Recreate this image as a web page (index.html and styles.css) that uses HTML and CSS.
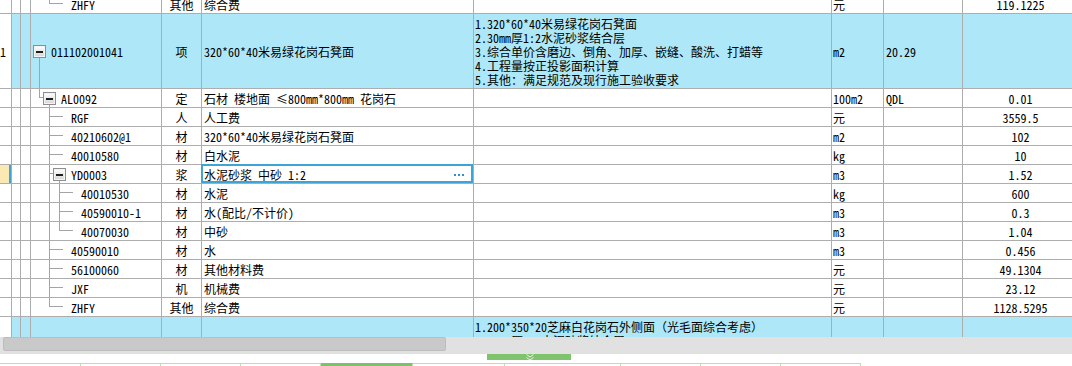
FILE: index.html
```html
<!DOCTYPE html>
<html lang="zh-CN">
<head>
<meta charset="utf-8">
<title>清单</title>
<link rel="stylesheet" href="styles.css">
</head>
<body>
<div class="app">
  <div class="grid">
    <div class="rows">
      <div class="row">
        <div class="c c0"></div><div class="c c1"></div><div class="c c2"></div>
        <div class="c c3 lv3 t-leaf3-last">ZHFY</div>
        <div class="c c4">其他</div><div class="c c5">综合费</div><div class="c c6"></div>
        <div class="c c7">元</div><div class="c c8"></div><div class="c c9">119.1225</div>
      </div>
      <div class="row tall hl">
        <div class="c c0">1</div><div class="c c1"></div><div class="c c2"></div>
        <div class="c c3 lv1 t-l1"><span class="box"></span>011102001041</div>
        <div class="c c4">项</div><div class="c c5">320*60*40米易绿花岗石凳面</div>
        <div class="c c6 desc">
          <span>1.320*60*40米易绿花岗石凳面</span>
          <span>2.30mm厚1:2水泥砂浆结合层</span>
          <span>3.综合单价含磨边、倒角、加厚、嵌缝、酸洗、打蜡等</span>
          <span>4.工程量按正投影面积计算</span>
          <span>5.其他：满足规范及现行施工验收要求</span>
        </div>
        <div class="c c7">m2</div><div class="c c8">20.29</div><div class="c c9"></div>
      </div>
      <div class="row">
        <div class="c c0"></div><div class="c c1"></div><div class="c c2"></div>
        <div class="c c3 lv2 t-l2"><span class="box"></span>AL0092</div>
        <div class="c c4">定</div><div class="c c5">石材 楼地面 ≤800mm*800mm 花岗石</div><div class="c c6"></div>
        <div class="c c7">100m2</div><div class="c c8">QDL</div><div class="c c9">0.01</div>
      </div>
      <div class="row">
        <div class="c c0"></div><div class="c c1"></div><div class="c c2"></div>
        <div class="c c3 lv3 t-leaf3">RGF</div>
        <div class="c c4">人</div><div class="c c5">人工费</div><div class="c c6"></div>
        <div class="c c7">元</div><div class="c c8"></div><div class="c c9">3559.5</div>
      </div>
      <div class="row">
        <div class="c c0"></div><div class="c c1"></div><div class="c c2"></div>
        <div class="c c3 lv3 t-leaf3">40210602@1</div>
        <div class="c c4">材</div><div class="c c5">320*60*40米易绿花岗石凳面</div><div class="c c6"></div>
        <div class="c c7">m2</div><div class="c c8"></div><div class="c c9">102</div>
      </div>
      <div class="row">
        <div class="c c0"></div><div class="c c1"></div><div class="c c2"></div>
        <div class="c c3 lv3 t-leaf3">40010580</div>
        <div class="c c4">材</div><div class="c c5">白水泥</div><div class="c c6"></div>
        <div class="c c7">kg</div><div class="c c8"></div><div class="c c9">10</div>
      </div>
      <div class="row">
        <div class="c c0 cur"></div><div class="c c1"></div><div class="c c2"></div>
        <div class="c c3 lv3n t-node3"><span class="box"></span>YD0003</div>
        <div class="c c4">浆</div>
        <div class="c c5 sel">水泥砂浆 中砂 1:2<span class="more"><i></i><i></i><i></i></span></div>
        <div class="c c6"></div>
        <div class="c c7">m3</div><div class="c c8"></div><div class="c c9">1.52</div>
      </div>
      <div class="row">
        <div class="c c0"></div><div class="c c1"></div><div class="c c2"></div>
        <div class="c c3 lv4 t-leaf4">40010530</div>
        <div class="c c4">材</div><div class="c c5">水泥</div><div class="c c6"></div>
        <div class="c c7">kg</div><div class="c c8"></div><div class="c c9">600</div>
      </div>
      <div class="row">
        <div class="c c0"></div><div class="c c1"></div><div class="c c2"></div>
        <div class="c c3 lv4 t-leaf4">40590010-1</div>
        <div class="c c4">材</div><div class="c c5">水(配比/不计价)</div><div class="c c6"></div>
        <div class="c c7">m3</div><div class="c c8"></div><div class="c c9">0.3</div>
      </div>
      <div class="row">
        <div class="c c0"></div><div class="c c1"></div><div class="c c2"></div>
        <div class="c c3 lv4 t-leaf4-last">40070030</div>
        <div class="c c4">材</div><div class="c c5">中砂</div><div class="c c6"></div>
        <div class="c c7">m3</div><div class="c c8"></div><div class="c c9">1.04</div>
      </div>
      <div class="row">
        <div class="c c0"></div><div class="c c1"></div><div class="c c2"></div>
        <div class="c c3 lv3 t-leaf3">40590010</div>
        <div class="c c4">材</div><div class="c c5">水</div><div class="c c6"></div>
        <div class="c c7">m3</div><div class="c c8"></div><div class="c c9">0.456</div>
      </div>
      <div class="row">
        <div class="c c0"></div><div class="c c1"></div><div class="c c2"></div>
        <div class="c c3 lv3 t-leaf3">56100060</div>
        <div class="c c4">材</div><div class="c c5">其他材料费</div><div class="c c6"></div>
        <div class="c c7">元</div><div class="c c8"></div><div class="c c9">49.1304</div>
      </div>
      <div class="row">
        <div class="c c0"></div><div class="c c1"></div><div class="c c2"></div>
        <div class="c c3 lv3 t-leaf3">JXF</div>
        <div class="c c4">机</div><div class="c c5">机械费</div><div class="c c6"></div>
        <div class="c c7">元</div><div class="c c8"></div><div class="c c9">23.12</div>
      </div>
      <div class="row">
        <div class="c c0"></div><div class="c c1"></div><div class="c c2"></div>
        <div class="c c3 lv3 t-leaf3-last">ZHFY</div>
        <div class="c c4">其他</div><div class="c c5">综合费</div><div class="c c6"></div>
        <div class="c c7">元</div><div class="c c8"></div><div class="c c9">1128.5295</div>
      </div>
      <div class="row tall hl">
        <div class="c c0"></div><div class="c c1"></div><div class="c c2"></div>
        <div class="c c3"></div>
        <div class="c c4"></div><div class="c c5"></div>
        <div class="c c6 desc">
          <span>1.200*350*20芝麻白花岗石外侧面（光毛面综合考虑）</span>
          <span>2.30mm厚1:2水泥砂浆结合层</span>
          <span>3.综合单价含磨边、倒角、加厚、嵌缝、酸洗、打蜡等</span>
          <span>4.工程量按展开面积计算</span>
          <span>5.其他：满足规范及现行施工验收要求</span>
        </div>
        <div class="c c7"></div><div class="c c8"></div><div class="c c9"></div>
      </div>
    </div>
  </div>
  <div class="hscroll"><div class="thumb"></div></div>
  <div class="bottom">
    <div class="handle-row">
      <div class="handle">
        <svg width="10" height="7" viewBox="0 0 10 7"><path d="M1.5 0.5 L5 3 L8.5 0.5 M1.5 3.5 L5 6 L8.5 3.5" fill="none" stroke="#e8f5e2" stroke-width="1"/></svg>
      </div>
    </div>
    <div class="tabs">
      <div class="tab w81"></div>
      <div class="tab w80"></div>
      <div class="tab w80"></div>
      <div class="tab w80"></div>
      <div class="tab w92 active"></div>
      <div class="tab w92"></div>
      <div class="tab w116"></div>
      <div class="tab w80"></div>
      <div class="tab w80"></div>
      <div class="tab w80"></div>
    </div>
  </div>
</div>
</body>
</html>
```
FILE: styles.css
```css
* { box-sizing: border-box; }
html, body { margin: 0; padding: 0; background: #fff; }

.app {
  --grid: #adadad;
  --tree: #a4a4a4;
  --hl: #aee8f8;
  --sel: #3ca5d6;
  width: 1072px;
  height: 366px;
  overflow: hidden;
  display: flex;
  flex-direction: column;
  font-family: "Noto Sans Mono CJK SC", "Noto Sans CJK SC", "Liberation Mono", monospace;
  font-size: 12px;
  color: #000;
}

.grid { height: 337px; flex: none; overflow: hidden; }
.rows { margin-top: -5px; width: 1080px; }

.row { display: flex; height: 19px; border-bottom: 1px solid var(--grid); }
.row.tall { height: 75px; }
.row.hl .c { background-color: var(--hl); }
.row.hl .c0 { background-color: #fff; }

.c {
  flex: none;
  border-right: 1px solid var(--grid);
  display: flex;
  align-items: center;
  white-space: nowrap;
  overflow: hidden;
  line-height: 18px;
  padding-top: 1px;
}
.c0 { width: 12px; }
.c1 { width: 9px; }
.c2 { width: 10px; }
.c3 { width: 131px; background-repeat: no-repeat; }
.c4 { width: 40px; justify-content: center; }
.c5 { width: 272px; padding-left: 2px; }
.c6 { width: 358px; padding-left: 1px; }
.c7 { width: 52px; padding-left: 1px; }
.c8 { width: 79px; padding-left: 2px; }
.c9 { width: 116px; justify-content: center; }

.c0.cur { background: #fce8b2; box-shadow: inset -2px 0 0 var(--sel); }

.desc { flex-direction: column; align-items: flex-start; justify-content: center; line-height: 14px; }

/* tree indentation */
.lv1 { padding-left: 2px; }
.lv2 { padding-left: 12px; }
.lv3n { padding-left: 22px; }
.lv3 { padding-left: 40px; }
.lv4 { padding-left: 50px; }

.box {
  flex: none;
  width: 13px;
  height: 13px;
  margin-right: 5px;
  border: 1px solid #8e8e8e;
  background: linear-gradient(#ffffff, #d6d6d6);
  box-shadow: inset 0 0 0 1px #f4f4f4;
  display: flex;
  align-items: center;
  justify-content: center;
}
.box::before { content: ""; width: 7px; height: 2px; background: #1e1e1e; }

/* tree connector lines */
.t-l1 {
  background-image: linear-gradient(var(--tree), var(--tree));
  background-size: 1px 50%;
  background-position: 8px 100%;
}
.t-l2 {
  background-image: linear-gradient(var(--tree), var(--tree)), linear-gradient(var(--tree), var(--tree)), linear-gradient(var(--tree), var(--tree));
  background-size: 1px 9px, 4px 1px, 1px 10px;
  background-position: 8px 0, 8px 8px, 18px 8px;
}
.t-leaf3 {
  background-image: linear-gradient(var(--tree), var(--tree)), linear-gradient(var(--tree), var(--tree));
  background-size: 1px 100%, 14px 1px;
  background-position: 18px 0, 18px 8px;
}
.t-leaf3-last {
  background-image: linear-gradient(var(--tree), var(--tree)), linear-gradient(var(--tree), var(--tree));
  background-size: 1px 9px, 14px 1px;
  background-position: 18px 0, 18px 8px;
}
.t-node3 {
  background-image: linear-gradient(var(--tree), var(--tree)), linear-gradient(var(--tree), var(--tree)), linear-gradient(var(--tree), var(--tree));
  background-size: 1px 100%, 4px 1px, 1px 10px;
  background-position: 18px 0, 18px 8px, 28px 8px;
}
.t-leaf4 {
  background-image: linear-gradient(var(--tree), var(--tree)), linear-gradient(var(--tree), var(--tree)), linear-gradient(var(--tree), var(--tree));
  background-size: 1px 100%, 1px 100%, 14px 1px;
  background-position: 18px 0, 28px 0, 28px 8px;
}
.t-leaf4-last {
  background-image: linear-gradient(var(--tree), var(--tree)), linear-gradient(var(--tree), var(--tree)), linear-gradient(var(--tree), var(--tree));
  background-size: 1px 100%, 1px 9px, 14px 1px;
  background-position: 18px 0, 28px 0, 28px 8px;
}

/* selected cell */
.sel { position: relative; overflow: visible; }
.sel::after {
  content: "";
  position: absolute;
  top: -1px; left: -1px; right: 0; bottom: 0;
  border: 2px solid var(--sel);
  pointer-events: none;
}
.more { margin-left: auto; margin-right: 9px; display: flex; gap: 2px; }
.more i { display: block; width: 2px; height: 2px; background: #3a8cd0; }

/* horizontal scrollbar */
.hscroll { flex: none; height: 17px; background: #e1e1e1; padding-left: 3px; }
.thumb {
  width: 443px;
  height: 14px;
  background: #c9c9c9;
  border: 1px solid #bdbdbd;
  border-radius: 2px;
}

/* bottom strip */
.bottom { flex: none; height: 12px; background: #fff; display: flex; flex-direction: column; }
.handle-row { height: 9px; flex: none; padding-left: 487px; }
.handle {
  width: 84px;
  height: 6px;
  background: #80c36d;
  display: flex;
  justify-content: center;
  align-items: flex-start;
  overflow: hidden;
}
.handle svg { display: block; margin-left: 2px; }
.tabs { display: flex; flex: none; height: 10px; }
.tab { flex: none; height: 10px; border-top: 1px solid #b8e1ab; border-right: 1px solid #b8e1ab; }
.tab.active { background: #7ec06b; border-top-color: #7ec06b; }
.w80 { width: 80px; }
.w81 { width: 81px; }
.w92 { width: 92px; }
.w116 { width: 116px; }
```
